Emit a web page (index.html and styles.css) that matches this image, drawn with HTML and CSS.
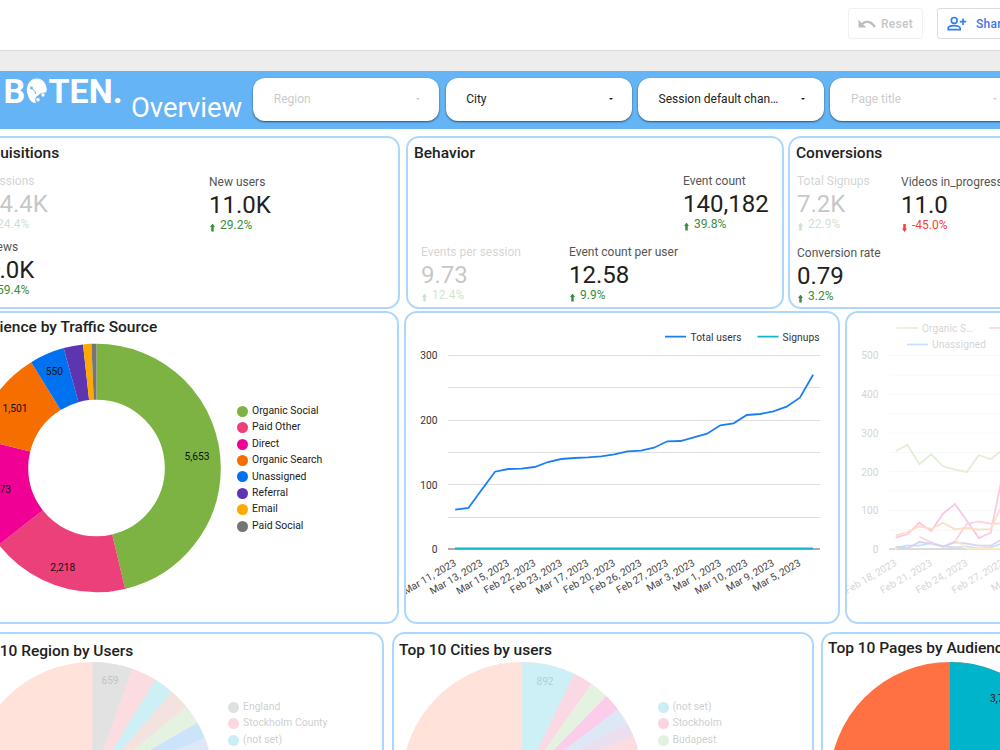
FILE: index.html
```html
<!DOCTYPE html>
<html lang="en">
<head>
  <meta charset="UTF-8">
  <meta name="viewport" content="width=device-width, initial-scale=1.0">
  <title>Roboten Overview</title>
  <link rel="stylesheet" href="styles.css">
</head>
<body>
  <div class="toolbar">
    <button class="tool-btn disabled" type="button">
      <svg class="undo" width="18" height="10" viewBox="0 0 18 10"><path d="M0.5 0.8V8.6H8.3L5.2 5.5C8.6 2.9 13.2 4 15.6 8.6L17.8 7.8C14.8 1.6 8.2 .2 3.6 3.9Z" fill="#bdbdbd"/></svg>
      Reset
    </button>
    <button class="tool-btn share" type="button">
      <svg width="20" height="16" viewBox="0 0 20 16" fill="none" stroke="#2f80f3" stroke-width="1.7"><circle cx="7.2" cy="4.4" r="2.9"/><path d="M1.2 13.6V12.2C1.2 10.6 4.5 9.7 7.2 9.7S13.2 10.6 13.2 12.2V13.6Z"/><path d="M16 2.5V8.9M12.8 5.7H19.2"/></svg>
      Share
    </button>
  </div>

  <div class="report">
    <div class="header">
      <svg class="logo" width="125" height="57" viewBox="0 71 125 57">
        <text x="-45" y="103">RO</text>
        <text x="3.5" y="103">B</text>
        <ellipse cx="36.8" cy="89.3" rx="10" ry="10.7"/>
        <path d="M27 87.5C27 97 30 103 36 103L36 96L29 93Z"/>
        <path d="M36 103C34.500 100 35.500 96.500 38 95.500C40 93 43 92 47.500 92.500L48 103Z" fill="#64b4f6"/>
        <circle cx="38" cy="99.7" r="1.8"/>
        <circle cx="43" cy="95" r="1.7"/>
        <path d="M31.500 88L35 91.500L35.500 94" stroke="#64b4f6" fill="none"/>
        <circle cx="31.500" cy="88" r="1.4" fill="#64b4f6"/>
        <text x="48.500" y="103" textLength="74">TEN.</text>
      </svg>
      <h1>Overview</h1>
      <div class="filter off"><span>Region</span><i></i></div>
      <div class="filter"><span>City</span><i></i></div>
      <div class="filter"><span>Session default chan…</span><i></i></div>
      <div class="filter off"><span>Page title</span><i></i></div>
    </div>

    <div class="row scores">
      <div class="card acquisitions">
        <h2>Acquisitions</h2>
        <div class="grid">
          <div class="score off"><p>Sessions</p><b>14.4K</b><em>24.4%</em></div>
          <div class="score low"><p>New users</p><b>11.0K</b><em>29.2%</em></div>
          <div class="score"><p>Views</p><b>9.0K</b><em>59.4%</em></div>
        </div>
      </div>
      <div class="card behavior">
        <h2>Behavior</h2>
        <div class="grid">
          <div class="score third"><p>Event count</p><b>140,182</b><em>39.8%</em></div>
          <div class="score off"><p>Events per session</p><b>9.73</b><em>12.4%</em></div>
          <div class="score"><p>Event count per user</p><b>12.58</b><em>9.9%</em></div>
        </div>
      </div>
      <div class="card conversions">
        <h2>Conversions</h2>
        <div class="grid">
          <div class="score off"><p>Total Signups</p><b>7.2K</b><em>22.9%</em></div>
          <div class="score low"><p>Videos in_progress</p><b>11.0</b><em class="down">-45.0%</em></div>
          <div class="score"><p>Conversion rate</p><b>0.79</b><em>3.2%</em></div>
        </div>
      </div>
    </div>

    <div class="row charts">
      <div class="card traffic">
        <h2>Audience by Traffic Source</h2>
        <div class="pie-box">
          <svg class="donut" width="257" height="250" viewBox="-36 343.5 257 250">
            <g transform="rotate(-90 96.5 468.5)" fill="none" stroke-width="56">
              <circle cx="96.5" cy="468.5" r="96.3" pathLength="360" stroke="#7cb342" stroke-dasharray="166.6 360"/>
              <circle cx="96.5" cy="468.5" r="96.3" pathLength="360" stroke="#ec407a" stroke-dasharray="65.2 360" stroke-dashoffset="-166.6"/>
              <circle cx="96.5" cy="468.5" r="96.3" pathLength="360" stroke="#f10096" stroke-dasharray="52.2 360" stroke-dashoffset="-231.8"/>
              <circle cx="96.5" cy="468.5" r="96.3" pathLength="360" stroke="#f66d00" stroke-dasharray="44.3 360" stroke-dashoffset="-284"/>
              <circle cx="96.5" cy="468.5" r="96.3" pathLength="360" stroke="#0072f0" stroke-dasharray="16.3 360" stroke-dashoffset="-328.3"/>
              <circle cx="96.5" cy="468.5" r="96.3" pathLength="360" stroke="#5e35b1" stroke-dasharray="9.1 360" stroke-dashoffset="-344.6"/>
              <circle cx="96.5" cy="468.5" r="96.3" pathLength="360" stroke="#ffa800" stroke-dasharray="3.9 360" stroke-dashoffset="-353.7"/>
              <circle cx="96.5" cy="468.5" r="96.3" pathLength="360" stroke="#757575" stroke-dasharray="2.4 360" stroke-dashoffset="-357.6"/>
            </g>
            <g class="slice-label">
              <text x="197" y="460">5,653</text>
              <text x="62.7" y="571">2,218</text>
              <text x="-1.5" y="493">1,773</text>
              <text x="15" y="412.5">1,501</text>
              <text x="54.3" y="375">550</text>
            </g>
          </svg>
          <ul class="legend">
            <li class="c-green">Organic Social</li>
            <li class="c-rose">Paid Other</li>
            <li class="c-pink">Direct</li>
            <li class="c-orange">Organic Search</li>
            <li class="c-blue">Unassigned</li>
            <li class="c-purple">Referral</li>
            <li class="c-amber">Email</li>
            <li class="c-gray">Paid Social</li>
          </ul>
        </div>
      </div>

      <div class="card users">
        <svg width="432" height="309" viewBox="406 313 432 309">
          <path d="M665 336.7H686" stroke="#1a7ff5" stroke-width="1.7"/>
          <path d="M757.5 336.7H778.5" stroke="#12b5cb" stroke-width="1.7"/>
          <text x="690.5" y="341" textLength="51">Total users</text>
          <text x="782.5" y="341" textLength="37">Signups</text>
          <path d="M448 355.5H820M448 387.5H820M448 420.5H820M448 452.5H820M448 484.5H820M448 517.5H820" stroke="#dedede"/>
          <path d="M448 549H820" stroke="#8f8f8f" stroke-width="1.7"/>
          <g text-anchor="end">
            <text x="437.5" y="359">300</text>
            <text x="437.5" y="424">200</text>
            <text x="437.5" y="488.5">100</text>
            <text x="437.5" y="552.5">0</text>
          </g>
          <path d="M455 548.6H813" stroke="#12b5cb" stroke-width="2"/>
          <polyline fill="none" stroke="#1a7ff5" stroke-width="1.8" points="455.2,509.7 468.4,508 481.7,489.7 495,471.7 508.2,469 521.5,468.7 534.7,467 548,462 561.2,459 574.5,458 587.8,457.3 601,456.3 614.3,454.3 627.5,451.3 640.8,450.7 654,447.7 667.3,441.3 680.6,441 693.8,437.3 707.1,433.7 720.3,425.3 733.6,423.3 746.8,415 760.1,414 773.4,411.3 786.6,406.7 799.9,397.7 813.1,374.7"/>
          <g class="dates">
            <text transform="translate(457 565) rotate(-30)">Mar 11, 2023</text>
            <text transform="translate(483.5 565) rotate(-30)">Mar 13, 2023</text>
            <text transform="translate(510 565) rotate(-30)">Mar 15, 2023</text>
            <text transform="translate(536.5 565) rotate(-30)">Feb 22, 2023</text>
            <text transform="translate(563 565) rotate(-30)">Feb 23, 2023</text>
            <text transform="translate(589.5 565) rotate(-30)">Mar 17, 2023</text>
            <text transform="translate(616 565) rotate(-30)">Feb 20, 2023</text>
            <text transform="translate(642.5 565) rotate(-30)">Feb 26, 2023</text>
            <text transform="translate(669 565) rotate(-30)">Feb 27, 2023</text>
            <text transform="translate(695.5 565) rotate(-30)">Mar 3, 2023</text>
            <text transform="translate(722 565) rotate(-30)">Mar 1, 2023</text>
            <text transform="translate(748.5 565) rotate(-30)">Mar 10, 2023</text>
            <text transform="translate(775 565) rotate(-30)">Mar 9, 2023</text>
            <text transform="translate(801.5 565) rotate(-30)">Mar 5, 2023</text>
          </g>
        </svg>
      </div>

      <div class="card channels">
        <svg class="faded" width="432" height="309" viewBox="847 313 432 309">
          <path d="M896.5 328H918" stroke="#7cb342" stroke-width="1.7"/>
          <path d="M989 328H1011" stroke="#ec407a" stroke-width="1.7"/>
          <path d="M907 344.5H928" stroke="#0072f0" stroke-width="1.7"/>
          <text x="922" y="331.5" textLength="51">Organic S…</text>
          <text x="932" y="348" textLength="54">Unassigned</text>
          <path d="M889 355.5H1060M889 375H1060M889 394.5H1060M889 413.5H1060M889 433H1060M889 452.5H1060M889 471.5H1060M889 491H1060M889 510.5H1060M889 530H1060" stroke="#dedede"/>
          <path d="M889 549H1060" stroke="#333" stroke-width="1.5"/>
          <g text-anchor="end">
            <text x="878.5" y="359">500</text>
            <text x="878.5" y="398">400</text>
            <text x="878.5" y="437">300</text>
            <text x="878.5" y="476">200</text>
            <text x="878.5" y="514">100</text>
            <text x="878.5" y="552.5">0</text>
          </g>
          <g fill="none" stroke-width="1.8">
            <polyline stroke="#7cb342" points="895.7,451 907.5,445 919.4,464.3 931.2,454.3 943,466.3 955,469.7 967,472 978.8,455 990.7,459.3 1002.5,450"/>
            <polyline stroke="#f10096" points="895.7,537.7 907.5,534.3 919.4,522.7 931.2,531 943,513.7 955,504 967,521 978.8,538 990.7,532.7 1002.5,475"/>
            <polyline stroke="#ec407a" points="919.4,536.7 931.2,542.3 943,547 955,541 967,523.7 978.8,521.7 990.7,523.7 1002.5,523.7"/>
            <polyline stroke="#f66d00" points="895.7,535.7 907.5,532 919.4,526.3 931.2,529 943,522.7 955,529.3 967,528 978.8,529.7 990.7,529 1002.5,504"/>
            <polyline stroke="#0072f0" points="895.7,547.7 907.5,545.7 919.4,545.7 931.2,543 943,546.3 955,547.3 967,546.3 978.8,548.3 990.7,547.3 1002.5,543.5"/>
            <polyline stroke="#5e35b1" points="895.7,547 907.5,548.3 919.4,542 931.2,543.7 943,546.3 955,542.3 967,543.7 978.8,545.7 990.7,545.7 1002.5,539"/>
            <polyline stroke="#ffa800" points="955,539.5 967,548.7 1002.5,548.7"/>
          </g>
          <circle cx="895.5" cy="548.3" r="1.5" fill="#ffa800"/>
          <g class="dates">
            <text transform="translate(897.5 565) rotate(-30)">Feb 18, 2023</text>
            <text transform="translate(933 565) rotate(-30)">Feb 21, 2023</text>
            <text transform="translate(968.5 565) rotate(-30)">Feb 24, 2023</text>
            <text transform="translate(1004.5 565) rotate(-30)">Feb 27, 2023</text>
            <text transform="translate(1040 565) rotate(-30)">Mar 2, 2023</text>
          </g>
        </svg>
      </div>
    </div>

    <div class="row tops">
      <div class="card regions">
        <h2>Top 10 Region by Users</h2>
        <div class="pie-box">
          <svg width="243" height="243" viewBox="-29 662 243 243">
            <g transform="rotate(-90 92.3 783.2)" fill="none" stroke-width="121.2">
              <circle cx="92.3" cy="783.2" r="60.6" stroke="#ffe2da"/>
              <circle cx="92.3" cy="783.2" r="60.6" pathLength="360" stroke="#e2e2e2" stroke-dasharray="19.1 360"/>
              <circle cx="92.3" cy="783.2" r="60.6" pathLength="360" stroke="#fbdde1" stroke-dasharray="12.3 360" stroke-dashoffset="-19.1"/>
              <circle cx="92.3" cy="783.2" r="60.6" pathLength="360" stroke="#ccf0f5" stroke-dasharray="9.9 360" stroke-dashoffset="-31.4"/>
              <circle cx="92.3" cy="783.2" r="60.6" pathLength="360" stroke="#f4e2de" stroke-dasharray="9.6 360" stroke-dashoffset="-41.3"/>
              <circle cx="92.3" cy="783.2" r="60.6" pathLength="360" stroke="#e3f2e1" stroke-dasharray="9.2 360" stroke-dashoffset="-50.9"/>
              <circle cx="92.3" cy="783.2" r="60.6" pathLength="360" stroke="#cce3fc" stroke-dasharray="8 360" stroke-dashoffset="-60.1"/>
              <circle cx="92.3" cy="783.2" r="60.6" pathLength="360" stroke="#dce8f6" stroke-dasharray="8 360" stroke-dashoffset="-68.1"/>
            </g>
            <text class="slice-label light" x="110" y="684">659</text>
          </svg>
          <ul class="legend faded">
            <li class="c-gray">England</li>
            <li class="c-red">Stockholm County</li>
            <li class="c-cyan">(not set)</li>
          </ul>
        </div>
      </div>
      <div class="card cities">
        <h2>Top 10 Cities by users</h2>
        <div class="pie-box">
          <svg width="243" height="243" viewBox="400.5 662 243 243">
            <g transform="rotate(-90 521.7 782.5)" fill="none" stroke-width="120.5">
              <circle cx="521.7" cy="782.5" r="60.25" stroke="#ffe2da"/>
              <circle cx="521.7" cy="782.5" r="60.25" pathLength="360" stroke="#ccf0f5" stroke-dasharray="25.6 360"/>
              <circle cx="521.7" cy="782.5" r="60.25" pathLength="360" stroke="#fbd9e4" stroke-dasharray="9.4 360" stroke-dashoffset="-25.6"/>
              <circle cx="521.7" cy="782.5" r="60.25" pathLength="360" stroke="#e3f2e1" stroke-dasharray="9.3 360" stroke-dashoffset="-35"/>
              <circle cx="521.7" cy="782.5" r="60.25" pathLength="360" stroke="#fccceb" stroke-dasharray="8.2 360" stroke-dashoffset="-44.3"/>
              <circle cx="521.7" cy="782.5" r="60.25" pathLength="360" stroke="#dce8f6" stroke-dasharray="7.9 360" stroke-dashoffset="-52.5"/>
              <circle cx="521.7" cy="782.5" r="60.25" pathLength="360" stroke="#ebdfef" stroke-dasharray="6.7 360" stroke-dashoffset="-60.4"/>
              <circle cx="521.7" cy="782.5" r="60.25" pathLength="360" stroke="#fbdde1" stroke-dasharray="6.3 360" stroke-dashoffset="-67.1"/>
              <circle cx="521.7" cy="782.5" r="60.25" pathLength="360" stroke="#fde6d3" stroke-dasharray="6 360" stroke-dashoffset="-73.4"/>
            </g>
            <text class="slice-label light" x="544.5" y="685">892</text>
          </svg>
          <ul class="legend faded">
            <li class="c-cyan">(not set)</li>
            <li class="c-rose">Stockholm</li>
            <li class="c-lime">Budapest</li>
          </ul>
        </div>
      </div>
      <div class="card pages">
        <h2>Top 10 Pages by Audience</h2>
        <div class="pie-box">
          <svg width="243" height="243" viewBox="829 662 243 243">
            <g transform="rotate(-90 950 782.5)" fill="none" stroke-width="120.5">
              <circle cx="950" cy="782.5" r="60.25" stroke="#ff7043"/>
              <circle cx="950" cy="782.5" r="60.25" pathLength="360" stroke="#00b5cb" stroke-dasharray="110 360"/>
            </g>
            <text class="slice-label" x="1002.5" y="702">3,741</text>
          </svg>
        </div>
      </div>
    </div>
  </div>
</body>
</html>
```

FILE: styles.css
```css
* {
  box-sizing: border-box;
}
body {
  font-family: Roboto, "Liberation Sans", sans-serif;
  background-color: #ededed;
  color: #212121;
  margin: 0;
  width: 1000px;
  height: 750px;
  overflow: hidden;
}
h1, h2, p, ul {
  margin: 0;
  padding: 0;
}
svg {
  display: block;
  flex: none;
}
svg text {
  font-size: 10.2px;
  fill: #333;
}
.toolbar {
  height: 51px;
  background-color: #fff;
  border-bottom: 1px solid #dcdcdc;
  display: flex;
  gap: 14px;
  padding: 8px 0 0 848px;
}
.tool-btn {
  flex: none;
  display: flex;
  align-items: center;
  height: 31px;
  font-family: inherit;
  font-size: 12px;
  font-weight: 500;
  letter-spacing: 0.3px;
  background-color: #fff;
  border: 1px solid #dadce0;
  border-radius: 3px;
  padding: 0 9px;
  color: #4275ec;
}
.tool-btn.disabled {
  width: 75px;
  border-color: #f1f1f1;
  color: #c6c6c6;
}
.undo {
  margin-right: 5px;
}
.share {
  width: 100px;
  gap: 9px;
}
.report {
  margin-top: 20px;
  height: 679px;
  background-color: #fff;
  overflow: hidden;
}
.header {
  height: 57.5px;
  width: 1030px;
  background-color: #64b4f6;
  display: flex;
}
.logo {
  fill: #fff;
}
.logo text {
  font-size: 34px;
  font-weight: 700;
  fill: #fff;
}
h1 {
  width: 122px;
  margin-left: 6px;
  padding-top: 20px;
  font-size: 27.4px;
  line-height: 34px;
  font-weight: 400;
  color: #fff;
}
.filter {
  flex: none;
  display: flex;
  align-items: center;
  justify-content: space-between;
  width: 186px;
  height: 43px;
  margin: 7px 6.4px 0 0;
  padding: 0 19px 1px 20.5px;
  border-radius: 12px;
  background-color: #fff;
  box-shadow: 0 1px 2px rgba(0, 0, 0, 0.55);
  font-size: 12px;
}
h1 + .filter {
  margin-left: 0.3px;
}
.filter i {
  border: 2.5px solid transparent;
  border-top-color: currentColor;
  border-bottom: 0;
}
.filter.off {
  color: #ccc;
}
.row {
  display: flex;
  margin-left: -36px;
  width: 1300px;
}
.card {
  flex: none;
  border: 2px solid #add8fc;
  border-radius: 13px;
  background-color: #fff;
  overflow: hidden;
}
h2 {
  font-size: 15.5px;
  line-height: 20px;
  font-weight: 500;
  padding-left: 6px;
  white-space: nowrap;
}
.scores {
  margin-top: 7.5px;
  gap: 5px;
}
.scores .card {
  height: 173px;
  padding-top: 5px;
}
.acquisitions {
  width: 436px;
}
.acquisitions h2 {
  padding-left: 7px;
}
.behavior {
  width: 378px;
  margin-left: 1px;
}
.conversions {
  width: 379px;
  margin-left: -1px;
}
.grid {
  display: grid;
  grid-template-columns: 223px 150px;
  grid-auto-rows: 66px;
  padding: 10px 0 0 20px;
}
.behavior .grid {
  grid-template-columns: 148px 114px 100px;
  grid-auto-rows: 71px;
  padding-left: 13px;
}
.conversions .grid {
  grid-template-columns: 104px 150px;
  grid-auto-rows: 72px;
  padding-left: 7px;
}
.third {
  grid-column: 3;
}
.score {
  white-space: nowrap;
}
.score.low {
  padding-top: 1px;
}
.score p {
  font-size: 12px;
  line-height: 16px;
  color: #555;
}
.score b {
  display: block;
  font-size: 24px;
  line-height: 30px;
  font-weight: 400;
}
.score em {
  display: flex;
  align-items: center;
  gap: 5px;
  margin-top: -2px;
  font-size: 12px;
  line-height: 14px;
  font-style: normal;
  color: #388e3c;
}
.score em::before {
  content: "";
  width: 5px;
  height: 8px;
  margin: 5px 0 0 1px;
  background-color: currentColor;
  clip-path: polygon(50% 0, 100% 45%, 75% 45%, 75% 100%, 25% 100%, 25% 45%, 0 45%);
}
.score em.down {
  color: #f44336;
}
.score em.down::before {
  transform: scaleY(-1);
}
.score.off {
  opacity: 0.25;
}
.charts {
  margin-top: 2px;
  gap: 5px;
}
.charts .card {
  height: 313px;
}
.charts .traffic {
  width: 435px;
  padding-top: 4px;
}
.users {
  width: 436px;
}
.channels {
  width: 436px;
}
.faded {
  opacity: 0.22;
}
.slice-label {
  text-anchor: middle;
}
.slice-label text,
text.slice-label {
  fill: #111;
}
text.slice-label.light {
  fill: #111;
  opacity: 0.15;
}
.dates {
  text-anchor: end;
}
.dates text {
  fill: #444;
}
.pie-box {
  display: flex;
}
.traffic .pie-box {
  margin: 6px 0 0 -2px;
}
.legend {
  list-style: none;
  margin: 60px 0 0 16px;
  font-size: 10.4px;
  line-height: 16.4px;
}
.legend li {
  display: flex;
  align-items: center;
  gap: 4px;
  white-space: nowrap;
}
.legend li::before {
  content: "";
  width: 11px;
  height: 11px;
  border-radius: 50%;
  background-color: #757575;
}
.legend .c-green::before { background-color: #7cb342; }
.legend .c-rose::before { background-color: #ec407a; }
.legend .c-pink::before { background-color: #f10096; }
.legend .c-orange::before { background-color: #f66d00; }
.legend .c-blue::before { background-color: #0072f0; }
.legend .c-purple::before { background-color: #5e35b1; }
.legend .c-amber::before { background-color: #ffa800; }
.legend .c-cyan::before { background-color: #12b5cb; }
.legend .c-red::before { background-color: #f0566b; }
.legend .c-lime::before { background-color: #7cc66f; }
.tops {
  margin-top: 8px;
  gap: 8px;
}
.tops .card {
  height: 300px;
}
.regions {
  width: 420px;
}
.cities {
  width: 422px;
}
.pages {
  width: 422px;
  margin-left: -1px;
}
.tops h2 {
  height: 28px;
  padding-top: 7px;
  padding-left: 4px;
}
.tops .cities h2 {
  padding-top: 6px;
  padding-left: 5px;
}
.tops .pages h2 {
  padding-top: 4px;
  padding-left: 5px;
}
.tops .legend {
  margin: 37px 0 0 14px;
}
.regions .pie-box {
  padding-left: 5px;
}
.cities .pie-box {
  padding-left: 6.5px;
}
.pages .pie-box {
  padding-left: 6px;
}
```
